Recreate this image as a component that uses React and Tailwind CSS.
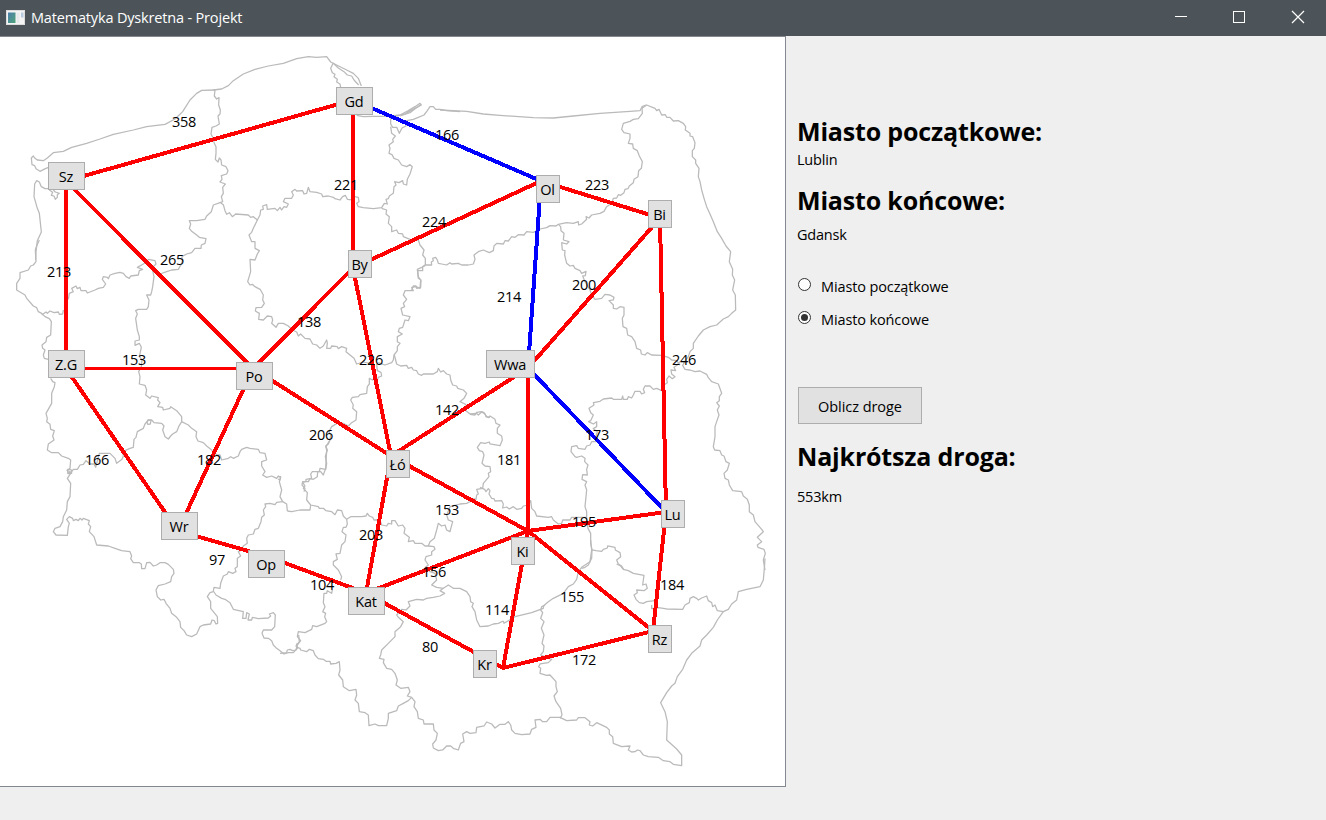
import React from "react";

// Each sheet holds province outlines at triple scale, offset from the map origin.
const sheets = [
  {
    x: 0,
    y: 0,
    paths: [
      "M146 502 L136 506 120 514 108 506 104 497 96 494 94 474 100 468 104 474 112 480 130 482 142 474 160 458 190 454 215 442 260 430 300 417 340 403 400 390 440 380 495 373 525 357 548 335 570 300 590 280 605 271 645 270",
      "M146 566 L135 566 124 560 118 546 110 542 104 552 102 590 112 625 118 640 124 696 112 722 108 755 107 780",
      "M148 570 L158 577 154 586 162 588 166 598 172 592 172 584 178 580 166 576 160 570",
      "M645 270 L643 288 650 297 657 293 656 315 661 330 660 342 654 348 658 372 648 378 636 382 633 402 638 412 643 430 648 440 648 460 646 478 654 486 658 474 663 480 665 495 678 500 684 512 680 522 664 527 666 538 660 546 676 552 668 562 670 580 664 590 668 605 660 608 640 615 634 635 620 648 615 658 590 662 568 662 572 672 568 685 575 694 590 705 598 712 618 716 615 730 604 735 603 745 585 745 575 758 560 762 545 770",
    ],
  },
  {
    x: 200,
    y: 40,
    paths: [
      "M40 150 L65 147 85 137 100 122 130 102 165 88 205 78 250 70 290 56 325 50 350 52 380 50 392 66 410 75 440 90 460 100 475 115 484 138",
      "M400 70 L415 84 432 95 442 105 455 108 462 120 476 135",
      "M400 68 L392 85 397 98 405 103 402 110 412 118 410 126 420 132 422 142",
      "M470 226 L490 230 520 229 560 229 600 225 625 212 645 200 660 190 664 195 640 208 615 222 575 232",
      "M572 235 L572 252 578 262 590 262 598 280 606 264 618 258 620 242 640 238 655 232 672 225 682 212 690 200 700 200 707 208 720 208 740 212 780 215",
      "M62 488 L70 494 75 512 80 523 88 518 97 530 107 522 145 525 152 532 160 530 172 540 180 525 182 510 190 508 188 498 200 494 202 508 225 505 232 512 240 502 245 510 252 500 260 502 265 492 250 485 255 475 275 475 280 465 275 455 285 448 290 453 308 452 312 462 320 460 325 442 330 455 350 457 365 462 368 470 385 468 400 472 405 476 420 480 428 470 436 466 442 478 455 480 455 468 475 472 477 485 470 490 475 500 490 503 520 506 545 503 553 490 562 492 558 478 565 476 568 468 580 460 582 440 588 435 584 425 597 428 608 422 610 432 620 435 622 418 630 402 637 380 630 374 620 380 605 375 595 360 582 355 576 344 567 340 570 325 567 315 580 305 578 298 586 288 575 280 572 260",
      "M545 505 L560 510 558 522 568 530 565 550 575 560 575 575 590 570 595 580 608 582 610 590 630 598 655 600 660 615 672 630 668 645 676 655 676 675",
      "M676 676 L665 682 652 688 655 715 663 720 662 742 650 745 648 738 640 738 635 750",
      "M172 540 L160 565 155 577 147 585 155 605 165 605 165 625 178 632 172 642 165 660 150 658 152 695 143 725 150 735 157 733 165 740 180 748",
    ],
  },
  {
    x: 400,
    y: 80,
    paths: [
      "M0 108 L30 98 48 84 62 74",
      "M120 90 L200 94 250 102 300 106 400 113 460 114 520 108 600 100 690 94 720 92 726 80 738 75",
      "M726 82 L727 100 715 116 700 118 690 124 670 130 665 148 672 158 690 162 690 175 685 190 698 192 700 205 712 212 718 228 727 245 724 265 716 272 714 290 702 298 700 308 688 318 684 326 675 328 672 338 662 346 655 344 650 354 640 355 635 370 620 380 612 394 600 400 575 405 567 414 558 410 560 418 545 432 536 435 535 425 520 430 500 428 475 433 468 438 450 437 440 443 420 447 400 457 380 455 372 465 355 464 345 472 335 470 325 483 315 482 310 492 290 490 282 498 280 512 268 518 250 510 235 515 222 525 225 538 220 552 205 555 185 555 175 550 155 552 150 548 140 555 125 552 115 550 112 540 107 532 98 535 100 542 94 546 95 555 75 555",
      "M475 433 L482 440 483 452 492 460 490 480 507 485 500 492 485 488 487 510 495 512 494 525 500 550 510 558 520 556 525 565 540 572 545 580 558 574 556 587 548 588 555 605 570 630",
    ],
  },
  {
    x: 560,
    y: 80,
    paths: [
      "M90 630 L95 645 105 658 125 655 135 643 150 645 162 652 160 660 147 662 160 675 160 685 170 687 180 680 192 682 192 705 187 715 189 740 200 745 203 765 215 770 225 785 230 805 242 810 244 822 255 825 262 818 275 825 305 826 325 832 335 840 350 842 360 855",
      "M246 85 L260 75 285 85 290 92 297 88 305 105 316 104 320 112 330 112 340 123 355 122 370 130 377 140 376 150 390 160 390 168 398 170 405 188 403 205 397 212 397 230 407 240 407 250 417 265 415 290 420 305 425 330 433 358 440 380 450 402 460 425 472 455 485 475 498 498 512 515 508 545 518 568 517 585 524 600 518 630 526 645 527 690 515 700 505 710 490 717 470 735 450 740 430 750 415 768 400 790 400 805 390 815 385 830 370 850",
    ],
  },
  {
    x: 470,
    y: 330,
    paths: [
      "M645 95 L638 106 645 118 660 120 675 125 690 123 710 133 715 143 725 155 745 162 755 190 748 200 748 212 740 218 748 228 742 240 747 255 740 275 735 290 735 320 730 350 734 360 750 362 755 375 762 378 768 395 778 400 772 420 762 430 765 445 775 450 778 465 788 482 815 485 820 498 832 508 838 525 838 545 850 555 855 575 875 598 880 605 862 622 875 635 862 645 864 652 882 658 886 670 880 690 885 720",
      "M630 95 L622 105 612 112 617 122 603 120 605 132 615 140 607 146 597 138 590 148 592 158 582 165 575 182 560 175 550 178 540 168 525 168 520 178 524 188 515 192 510 184 495 184 490 195 485 204 475 200 472 208 460 208 458 198 455 208 430 208 425 204 400 207 390 214 370 218 372 225 357 235 362 248 370 255 362 272 356 275 370 282 380 275 380 290 370 296 382 305 376 325 378 335 365 335 360 345 350 348 345 358 325 355 320 347 305 350 303 365 315 380 320 382 335 378 345 385 344 395 354 405 350 418 352 435 338 434 336 448 350 455 345 465 350 480 347 510 345 530 350 545 350 570 354 595 362 610 362 640 366 660 365 685 355 705 345 712 335 715",
      "M365 660 L378 662 395 664 400 658 412 654 413 648 435 652 436 660 450 668 452 680 440 690 445 702 455 708 462 720",
      "M0 253 L15 255 20 247 35 245 42 248 50 260 55 263 60 258 75 268 78 280 90 285 82 295 82 310 95 318 97 330 90 347 60 342 58 336 45 340 32 338 22 352 28 362 38 365 42 375 36 400 45 408 60 410 62 425 55 430 57 440 40 460 38 475 20 478 25 492 20 495 18 508 5 505",
      "M30 472 L44 478 48 485 55 476 60 482 57 492 65 505 72 506 75 513 95 512 100 522 98 534 110 531 118 537 130 530 140 538 155 535 160 528 175 525 182 512 185 535 195 545 200 558 235 562 245 560 250 570 265 582 275 580 278 570 300 570 305 562 350 562",
    ],
  },
  {
    x: 0,
    y: 240,
    paths: [
      "M545 50 L548 60 545 70 535 88 515 90 500 95 480 102 458 92 462 110 458 140 455 155 452 165 440 165 447 180 445 200 440 208 415 208 407 212 412 222 407 235 412 270 418 290 418 300 405 303 405 316 418 310 424 322 418 350 426 360 424 380 416 395 420 410 418 432 435 436 440 450 437 465 450 475 455 468 475 473 473 480 480 488 473 500 488 502 490 510 510 505 512 500 530 512 545 530 545 545",
      "M118 0 L110 18 106 30 108 65 100 75 92 78 85 90 60 98 60 115 50 130 50 150 75 165 80 175 100 198 110 203 115 215 125 220 135 230 148 236 154 245 152 285 140 292 138 305 126 315 128 325 135 330 130 345 133 355 145 358",
      "M152 415 L158 425 165 428 163 440 155 460 155 490 138 520 142 535 140 545 150 553 152 568 163 572 158 588 162 600 145 612 142 630 155 638 175 638 185 648 205 655 212 660 210 685 200 692",
      "M125 225 L138 216 142 220 150 213 162 218 175 216 178 223 188 222 190 210",
      "M205 178 L208 160 220 155 215 145 228 138 232 146 240 142 243 152 258 152 262 159 285 150 295 145 310 142 317 132 307 118 310 110 322 112 325 116 330 105 345 100 360 97 370 100 378 110 388 115 392 108 415 105 418 92 428 88 412 82 430 72 440 65 445 58 465 62 468 72 460 80",
      "M202 700 L215 695 220 688 232 688 240 675 250 673 258 662 270 672 282 672 287 682 298 640 330 640 345 655 350 670 366 658 370 648 368 635 390 625 400 622 402 598 408 592 412 575 430 565 435 552 445 540 455 540 462 548 485 550 492 558 488 570 495 590 505 597 512 588 518 582 530 575 536 560 545 545 565 555 575 565 590 575 588 590 594 603 610 608 620 618 635 630 645 645",
      "M441 548 L444 540 453 542 451 552 443 553 441 547",
    ],
  },
  {
    x: 230,
    y: 240,
    paths: [
      "M90 147 L100 165 98 180 103 190 95 202 78 203 76 213 88 220 86 238 100 240 112 228 125 230 128 240 125 250 138 262 145 250 160 250 175 258 187 270 200 276 205 288 212 282 225 295 240 297 248 312 260 315 270 325 280 318 290 300 292 310 290 325 302 325 305 318 322 320 325 326 335 320 350 325 348 335 360 345 372 355 380 372 400 366 430 372",
      "M440 372 L442 392 453 397 455 408 445 412 442 420 433 415 428 420 418 415 418 432 412 440 410 460 390 464 385 470 367 472 362 480 370 495 368 505 380 515 378 540 365 548 355 558 340 550 325 548 305 560 297 575 302 585 300 600 288 620 292 630 286 650 290 670 287 688 270 685 268 695 263 695 262 710 250 718 240 716 235 725 218 725 216 735 225 745 222 755",
      "M585 75 L578 80 578 92 563 92 565 110 572 120 570 145 558 140 545 142 550 152 525 152 520 165 530 178 520 190 524 200 513 205 518 225 540 230 535 242 525 240 518 262 508 265 505 275 517 282 502 290 502 305 510 310 502 320 502 332 492 345 490 360 485 368 465 375 445 368",
      "M493 345 L500 372 512 378 530 376 535 385 545 382 550 390 560 392 565 402 575 406 580 402 610 402 622 395 625 385 632 396 640 392 650 402 660 405 662 420 668 435 680 438 683 445 700 450 710 460 702 475 690 485 705 492 712 500 705 510 720 522 740 520 745 525 755 516 765 522 768 530 780 532",
    ],
  },
  {
    x: 0,
    y: 430,
    paths: [
      "M640 60 L650 75 660 75 665 90 685 85 692 80 700 85 715 78 720 65 725 58 740 52 750 55 775 58 780 68 795 70 800 90 785 95 785 108 795 125 788 135 800 142 815 138 830 145 835 138 842 142 838 155 845 180 840 200 848 215 860 222 862 243",
      "M205 122 L212 130 202 145 212 160 210 200 202 215 200 240 190 260 188 275 180 290 165 295 160 305 168 315 202 316 205 290 208 280 200 268 208 260 218 265 220 272 228 268 235 272 240 265 246 270 250 265 268 272 265 282 272 290 268 305 282 320 290 345 325 348 345 355 365 362 390 365 395 378 392 386 400 398 418 398 424 402 425 416 435 416 440 398 450 397 460 408 470 405 480 398 495 398 505 403 520 418 522 430 515 440 512 455 495 462 475 467 468 480 472 500 482 510 492 508 498 520 510 535 515 550 530 562 540 575 542 592 552 602 560 615 575 620 590 612 600 590 610 585 632 582 636 570 643 572 648 582 653 580 652 560 640 545 632 535 632 515 622 500 630 488 640 485",
      "M848 215 L830 217 825 224 810 220 795 222 797 230 790 240 793 255 785 262 783 275 775 295 765 298 760 312 745 315 740 325 742 340 730 348 725 360 715 365 722 378 712 385 712 410 705 415 708 425 698 430 685 425 682 432 670 438 662 460 660 475 642 472 640 483 648 495 665 505 675 508 690 518 700 538 730 545 728 565 738 565 740 548 748 552 744 570 755 570 757 562 775 566 805 564 812 558 808 552 820 548 826 555 824 590 815 600 790 600 786 610 792 624 805 625 815 632 820 645 830 655 840 662 852 672 865 668 880 668 892 655 888 648 898 635 896 615",
      "M202 118 L214 120 215 130 204 131 202 118",
      "M833 140 L842 140 840 150 834 147",
    ],
  },
  {
    x: 280,
    y: 440,
    paths: [
      "M0 640 L20 638 22 630 30 628 38 632 48 630 52 615 62 602 52 590 55 575 75 578 95 568 98 557 110 560 135 550 140 545 134 530 137 520 128 515 135 500 130 488 132 460 140 460 142 452 155 460 157 450",
      "M50 610 L52 622 60 625 62 630 80 635 88 628 100 632 105 645 115 656 130 658 138 664 150 664 152 672 168 670 178 665 180 690 176 705 188 720 190 740 208 752 228 748 230 765 225 780 235 790 238 815 255 818 265 825 267 857 285 852 295 857 320 857 325 835 325 820 350 812 355 798 370 790 385 782 395 772",
      "M22 213 L35 215 60 210 90 210 92 195",
      "M150 0 L145 12 137 18 140 30 137 85 130 105 122 95 97 95 92 102 95 115 78 118 78 124 68 127 75 138 70 145 82 158 80 180 92 195 115 200 118 205 130 205 138 212 155 215 165 224 172 210 185 212 190 228 200 238 212 230 245 230 258 228 262 220 268 228 278 232 282 240 300 240 305 255 320 258 325 250 335 252 335 242 345 242 355 258 368 255 375 265 372 280 388 292 385 305 400 302 405 310 425 310 435 318 445 318 450 305 463 295 470 270 475 250 485 258 495 255 500 270 510 275 518 245 505 240 500 225 510 200 540 192 560 190 580 180",
      "M200 238 L202 252 198 262 190 262 186 275 198 285 195 305 185 315 180 340 168 342 172 358 160 365 160 375 175 390 185 410 182 420",
      "M445 318 L462 320 465 328 455 335 455 345 438 350 435 360 445 375 436 382 450 395 465 400 470 420 455 435 470 442 490 445 505 435 520 445 540 445 560 455 570 470 572 485 580 490 576 500 585 515 590 540 600 560 625 558 640 552 655 550 670 543",
      "M490 445 L480 452 494 460 480 468 460 472 440 475 430 480 410 478 385 485 390 498 378 510 365 508 350 525 355 532 370 545 362 560 345 575 345 590 325 610 305 630 302 645 298 655 312 658 310 668 320 685 335 688 345 700 352 720 348 735 362 745 385 742 390 755 382 768 395 772 405 785 402 800 412 815 415 835 430 840 432 852 460 852 462 870 472 880 468 900 458 912 460 924 475 932 488 930 500 918 512 918 520 925 535 930 542 910 552 905 548 882 560 875 570 880 588 878 590 862 612 858 620 846 635 852 645 864 660 853",
    ],
  },
  {
    x: 500,
    y: 540,
    paths: [
      "M10 243 L12 250 45 230 95 218 130 205 130 198 145 185 160 175 190 160 205 140 220 132 230 118 235 95 245 82 270 65 275 30 272 0",
      "M135 196 L125 200 122 210 128 218 122 235 132 245 124 265 132 285 126 310 132 318 130 335 122 345 135 350 155 358 145 368 120 372 116 380 122 385 120 400 140 406 150 405 168 425 168 440 172 455 162 468 168 485 182 505 186 525 180 535",
      "M0 553 L15 553 25 545 32 555 35 570 45 580 65 584 90 582 95 568 108 562 105 540 120 538 128 545 140 545 150 532 180 532 200 542 230 540 235 533 255 533 270 545 268 555 278 558 290 548 320 562 328 570 328 582 338 590 340 610 365 620 390 618 385 630 395 636 405 635 412 630 420 632 430 645 445 650 475 652 490 662 510 665 520 673 545 677 545 645 530 627 500 600 502 545 495 515 482 488 500 458 515 438 525 430 532 410 548 388 560 360 575 340 600 318 605 300 620 285 640 262 652 240 670 215 685 208 695 192 710 180 715 155 740 148 780 140 790 120 793 85 795 55",
      "M370 88 L385 92 400 100 432 106 430 120 428 135 438 132 442 145 432 152 410 150 412 158 402 165 408 178 418 188 430 190 440 185 465 182",
      "M370 88 L362 78 350 72",
      "M455 195 L455 206 475 203 500 207 548 208 555 195 568 188 570 175 580 170 590 175 595 180 605 174 620 168 625 182 635 188 638 200 645 195 652 212 670 215",
    ],
  },
];

const nodes = {
  Sz: [66, 181], Gd: [353, 100], Ol: [541, 181], Bi: [660, 218], By: [353, 268],
  ZG: [66, 368.5], Po: [253, 368.5], Wwa: [528, 368], Lo: [391, 456], Lu: [666, 512],
  Wr: [178, 531], Op: [266, 556], Kat: [366, 593], Ki: [528, 531], Kr: [503, 668], Rz: [653, 631],
};

const roads = [
  ["Sz", "Gd"], ["Sz", "ZG"], ["Sz", "Po"], ["ZG", "Po"], ["ZG", "Wr"], ["Gd", "By"],
  ["By", "Ol"], ["By", "Po"], ["By", "Lo"], ["Ol", "Bi"], ["Bi", "Wwa"], ["Bi", "Lu"],
  ["Po", "Lo"], ["Po", "Wr"], ["Wr", "Op"], ["Op", "Kat"], ["Kat", "Lo"], ["Kat", "Ki"],
  ["Kat", "Kr"], ["Lo", "Wwa"], ["Lo", "Ki"], ["Wwa", "Ki"], ["Ki", "Lu"], ["Ki", "Rz"],
  ["Ki", "Kr"], ["Kr", "Rz"], ["Lu", "Rz"],
];

const route = [["Gd", "Ol"], ["Ol", "Wwa"], ["Wwa", "Lu"]];

const cities = [
  ["Sz", 48, 162, 37], ["Gd", 336, 87, 37], ["Ol", 536, 175, 24], ["Bi", 648, 200, 24],
  ["By", 348, 250, 24], ["Z.G", 48, 350, 37], ["Po", 236, 362, 37], ["Wwa", 486, 350, 49],
  ["Łó", 386, 450, 24], ["Lu", 661, 500, 24], ["Wr", 161, 512, 37], ["Op", 248, 550, 37],
  ["Kat", 348, 587, 37], ["Ki", 511, 537, 24], ["Kr", 473, 650, 24], ["Rz", 648, 625, 24],
];

const distances = [
  [358, 172, 122], [221, 334, 185], [166, 435, 135], [224, 422, 222], [223, 585, 185],
  [200, 572, 285], [214, 497, 297], [265, 160, 260], [213, 47, 272], [153, 122, 360],
  [138, 297, 322], [226, 359, 360], [206, 309, 435], [142, 435, 410], [246, 672, 360],
  [166, 85, 460], [182, 197, 460], [97, 209, 560], [203, 359, 535], [104, 310, 585],
  [156, 422, 572], [80, 422, 647], [153, 435, 510], [181, 497, 460], [173, 585, 435],
  [195, 572, 522], [114, 485, 610], [155, 560, 597], [172, 572, 660], [184, 660, 585],
];

function Road({ ends, color }) {
  const [a, b] = ends.map((name) => nodes[name]);
  return (
    <line
      x1={a[0]} y1={a[1]} x2={b[0]} y2={b[1]}
      stroke={color}
      strokeWidth={a[1] === b[1] ? 3 : 4}
      strokeLinecap="round"
      shapeRendering="crispEdges"
    />
  );
}

function TitleBar() {
  return (
    <header className="flex h-9 shrink-0 items-center bg-[#4c5459] text-white">
      <svg className="ml-[6px] h-4 w-[19px]" viewBox="0 0 19 16">
        <defs>
          <linearGradient id="pane" x1="0" y1="0" x2="1" y2="1">
            <stop offset="0" stopColor="#4d7fae" />
            <stop offset="1" stopColor="#4fa477" />
          </linearGradient>
        </defs>
        <rect x="0.5" y="0.5" width="18" height="14" fill="#f4f4f4" stroke="#dcdcdc" />
        <rect x="2" y="2.5" width="7.5" height="10.5" fill="url(#pane)" />
        <rect x="10.5" y="2.5" width="3" height="10.5" fill="#e8e9eb" />
        <rect x="15" y="2.5" width="2.5" height="5" fill="#b9cbe0" />
      </svg>
      <h1 className="ml-[6px] grow text-[14.5px] leading-5 tracking-[-0.17px]">Matematyka Dyskretna - Projekt</h1>
      <div className="flex">
        <svg className="h-9 w-[58px]" viewBox="0 0 58 36" fill="none" stroke="#fff" shapeRendering="crispEdges">
          <path d="M23 16.5H35" />
        </svg>
        <svg className="h-9 w-[58px]" viewBox="0 0 58 36" fill="none" stroke="#fff" shapeRendering="crispEdges">
          <rect x="23.5" y="11.5" width="11" height="11" />
        </svg>
        <svg className="h-9 w-[58px]" viewBox="0 0 58 36" fill="none" stroke="#fff" strokeWidth="1.2">
          <path d="M24 11L36 23M36 11L24 23" />
        </svg>
      </div>
    </header>
  );
}

function CityMap() {
  return (
    <main className="relative h-[751px] w-[786px] shrink-0 overflow-hidden border border-l-0 border-[#828790] bg-white">
      <svg className="block h-[749px] w-[785px]" viewBox="0 37 785 749" fill="none">
        {sheets.map((sheet, i) => (
          <g key={i} transform={`translate(${sheet.x} ${sheet.y}) scale(0.33333)`} stroke="#bababa" strokeWidth="3.8" strokeLinejoin="round">
            {sheet.paths.map((d) => <path key={d} d={d} />)}
          </g>
        ))}
        {roads.map((ends) => <Road key={ends.join()} ends={ends} color="#ff0000" />)}
        {route.map((ends) => <Road key={ends.join()} ends={ends} color="#0000ff" />)}
      </svg>
      {distances.map(([km, x, y]) => (
        <span
          key={`${x}-${y}`}
          className="absolute text-[14.5px] leading-5 tracking-[-0.25px]"
          style={{ left: x, top: y - 47 }}
        >
          {km}
        </span>
      ))}
      {cities.map(([name, x, y, width]) => (
        <button
          key={name}
          className="absolute flex h-7 items-center justify-center border border-[#adadad] bg-[#e1e1e1] pr-px pt-px text-[14.5px] leading-5 tracking-[-0.2px]"
          style={{ left: x, top: y - 37, width }}
        >
          {name}
        </button>
      ))}
    </main>
  );
}

function Heading({ children }) {
  return <h2 className="h-9 text-[25px] font-bold leading-[34px] tracking-[-0.17px]">{children}</h2>;
}

function Radio({ label, checked }) {
  return (
    <label className="flex h-5 items-center">
      <svg className="mb-[3px] ml-px h-[13px] w-[13px]" viewBox="0 0 13 13">
        <circle cx="6.5" cy="6.5" r="6" fill="#fff" stroke="#333" />
        {checked && <circle cx="6.5" cy="6.5" r="3.5" fill="#333" />}
      </svg>
      <span className="ml-[10px] pt-[2px] leading-5 tracking-[-0.12px]">{label}</span>
    </label>
  );
}

export default function App() {
  return (
    <div className="flex h-[820px] w-[1326px] flex-col overflow-hidden bg-[#efefef] font-['Open_Sans','Noto_Sans',sans-serif] text-black">
      <TitleBar />
      <div className="flex grow">
        <CityMap />
        <aside className="flex flex-col items-start pl-[11px] pt-[78px] text-[14.5px] leading-5 tracking-[-0.2px]">
          <Heading>Miasto początkowe:</Heading>
          <p>Lublin</p>
          <div className="mt-[13px]"><Heading>Miasto końcowe:</Heading></div>
          <p className="mt-[6px]">Gdansk</p>
          <div className="mt-[31px] flex flex-col gap-[13px]">
            <Radio label="Miasto początkowe" />
            <Radio label="Miasto końcowe" checked />
          </div>
          <button className="ml-px mt-[58px] h-[37px] w-[124px] border border-[#adadad] bg-[#e1e1e1] pt-[3px] tracking-[-0.05px]">Oblicz droge</button>
          <div className="mt-[15px]"><Heading>Najkrótsza droga:</Heading></div>
          <p className="mt-3">553km</p>
        </aside>
      </div>
    </div>
  );
}
